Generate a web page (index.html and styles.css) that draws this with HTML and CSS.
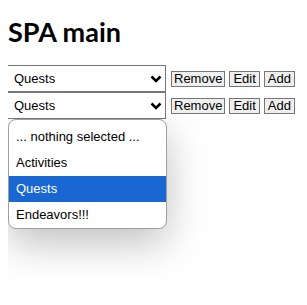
FILE: index.html
```html
<!DOCTYPE html>
<html>
<head>
	<title>SPA main</title>
	<link rel="stylesheet" href="styles.css">
</head>
<body>
	<h1>SPA main</h1>
	<div class="rows">
		<div class="row">
			<select class="pick">
				<option>... nothing selected ...</option>
				<option>Activities</option>
				<option selected>Quests</option>
				<option>Endeavors!!!</option>
			</select>
			<button type="button" class="remove">Remove</button>
			<button type="button">Edit</button>
			<button type="button">Add</button>
		</div>
		<div class="row">
			<select class="pick">
				<option>... nothing selected ...</option>
				<option>Activities</option>
				<option selected>Quests</option>
				<option>Endeavors!!!</option>
			</select>
			<button type="button" class="remove">Remove</button>
			<button type="button">Edit</button>
			<button type="button">Add</button>
		</div>
	</div>

	<!-- open dropdown of the second select -->
	<div class="droplist">
		<div class="opt">... nothing selected ...</div>
		<div class="opt">Activities</div>
		<div class="opt current">Quests</div>
		<div class="opt">Endeavors!!!</div>
	</div>
</body>
</html>
```

FILE: styles.css
```css
html {
	background: #fff;
}
body {
	margin: 8px;
	min-height: 289px;
	font-family: "Liberation Sans", Arial, sans-serif;
}
h1 {
	font-family: Lato, sans-serif;
	font-weight: 700;
	font-size: 27px;
	line-height: 32px;
	margin: 8px 0 17px 0;
	color: #000;
}
.row {
	display: flex;
	align-items: center;
}
.pick {
	flex-shrink: 0;
	-webkit-appearance: none;
	appearance: none;
	width: 159px;
	height: 27px;
	margin: 0 0 0 -1px;
	padding: 0 4px 0 6px;
	border: 1px solid #767676;
	border-radius: 0;
	background: #fff url("data:image/svg+xml;utf8,<svg xmlns='http://www.w3.org/2000/svg' width='12' height='8' viewBox='0 0 12 8'><path d='M1.5 1.5 L6 6 L10.5 1.5' fill='none' stroke='black' stroke-width='2.6'/></svg>") no-repeat right 3px center;
	font-family: "Liberation Sans", Arial, sans-serif;
	font-size: 13px;
	color: #000;
}
button {
	flex-shrink: 0;
	font-family: "Liberation Sans", Arial, sans-serif;
	font-size: 13px;
	color: #000;
	background: #efefef;
	border: 1px solid #767676;
	border-radius: 0;
	padding: 0 3px;
	height: 16px;
	line-height: 14px;
	margin-left: 4px;
}
button.remove {
	padding: 0 2px;
	margin-left: 5px;
}
.droplist {
	width: 157px;
	padding-top: 4px;
	background: #fff;
	border: 1px solid #a0a0a0;
	border-radius: 8px;
	box-shadow: 0 14px 40px rgba(0, 0, 0, 0.25);
	overflow: hidden;
	font-size: 13px;
}
.opt {
	height: 26px;
	line-height: 26px;
	padding-left: 7px;
	color: #000;
}
.opt.current {
	background: #1967d2;
	color: #fff;
}
```
